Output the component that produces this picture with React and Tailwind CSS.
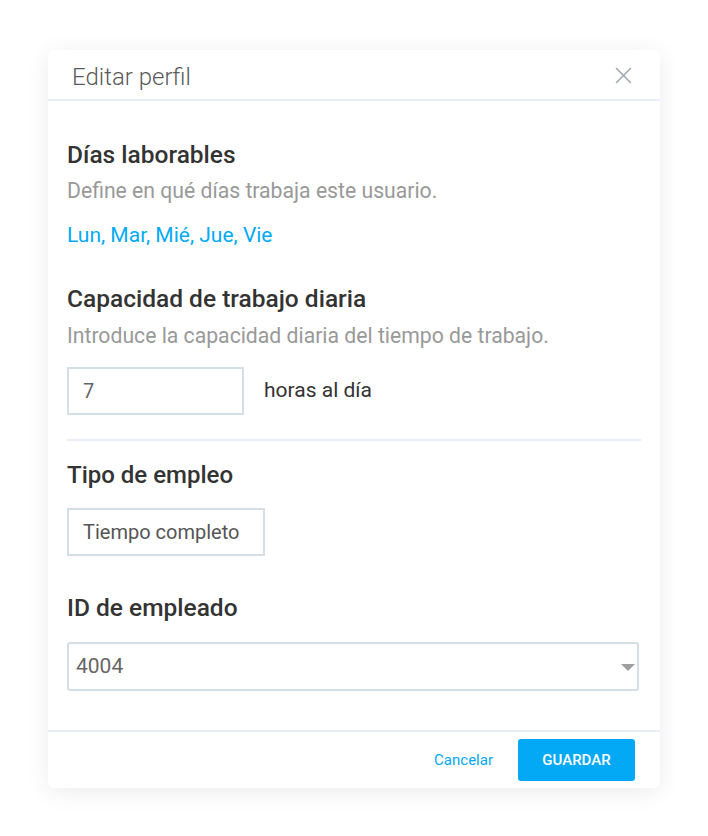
export default function App() {
  return (
    <div className="min-h-screen bg-white flex justify-center pt-[50px]" style={{ fontFamily: 'Roboto, "Noto Sans", sans-serif' }}>
      <div className="w-[612px] h-[738px] bg-white rounded-md shadow-[0_4px_24px_rgba(0,0,0,0.08)] flex flex-col">
        {/* Header */}
        <div className="h-[51px] flex items-center justify-between pl-6 pr-7 pt-[5px] border-b-2 border-[#e8eef3]">
          <h1 className="text-[24px] text-[#5a5a5a] font-light">Editar perfil</h1>
          <svg width="17" height="17" viewBox="0 0 16 16" className="text-[#9aa8b3] -mt-[3px]">
            <path d="M1 1L15 15M15 1L1 15" stroke="currentColor" strokeWidth="1.4" />
          </svg>
        </div>

        {/* Body */}
        <div className="flex-1 px-[19px] pt-[40px]">
          <h2 className="text-[24.5px] font-medium text-[#333333] leading-[28px]">Días laborables</h2>
          <p className="text-[21.2px] text-[#999999] mt-[10px] leading-[24px]">Define en qué días trabaja este usuario.</p>
          <p className="text-[21px] text-[#03a9f4] mt-[20px] leading-[24px]">Lun, Mar, Mié, Jue, Vie</p>

          <h2 className="text-[24.5px] font-medium text-[#333333] leading-[28px] mt-[38px]">Capacidad de trabajo diaria</h2>
          <p className="text-[21.2px] text-[#999999] mt-[11px] leading-[24px]">Introduce la capacidad diaria del tiempo de trabajo.</p>
          <div className="flex items-center mt-[19px]">
            <div className="w-[177px] h-[48px] border-2 border-[#d3dee6] flex items-center px-[14px] text-[20px] text-[#666666]">7</div>
            <span className="ml-[20px] text-[21px] text-[#333333]">horas al día</span>
          </div>

          <div className="border-t-2 border-[#e8eef3] mt-[24px]" />

          <h2 className="text-[24px] font-medium text-[#333333] leading-[28px] mt-[20px]">Tipo de empleo</h2>
          <div className="w-[198px] h-[48px] border-2 border-[#d3dee6] flex items-center px-[14px] text-[20px] text-[#555555] mt-[19px]">Tiempo completo</div>

          <h2 className="text-[24.5px] font-medium text-[#333333] leading-[30px] mt-[37px]">ID de empleado</h2>
          <div className="w-[572px] h-[49px] border-2 border-[#d3dee6] rounded-[3px] flex items-center justify-between pl-[7px] pr-[2px] text-[21px] text-[#666666] mt-[19px]">
            <span>4004</span>
            <svg width="14" height="7" viewBox="0 0 14 7" className="mt-[2px]">
              <path d="M0 0H14L7 7Z" fill="#9e9e9e" />
            </svg>
          </div>
        </div>

        {/* Footer */}
        <div className="h-[58px] border-t-2 border-[#e8eef3] flex items-center justify-end pr-[25px]">
          <button className="text-[15px] text-[#03a9f4] mr-[25px]">Cancelar</button>
          <button className="w-[117px] h-[42px] bg-[#03a9f4] rounded-[3px] text-white text-[15px] font-medium">GUARDAR</button>
        </div>
      </div>
    </div>
  );
}
